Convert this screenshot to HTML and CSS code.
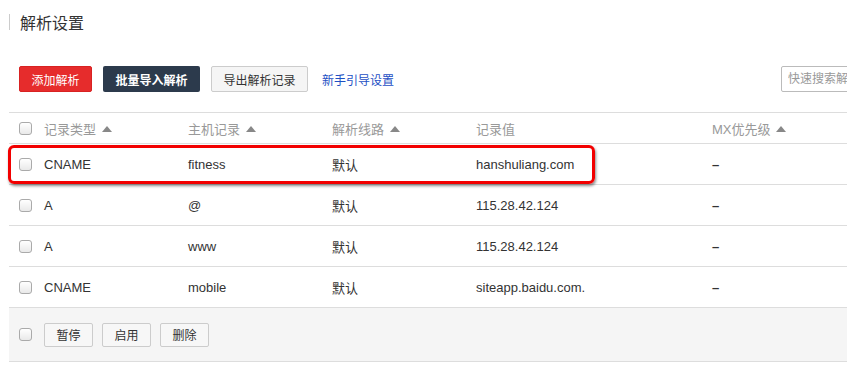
FILE: index.html
```html
<!DOCTYPE html>
<html lang="zh-CN">
<head>
    <meta charset="UTF-8">
    <title>解析设置</title>
    <link rel="stylesheet" href="styles.css">
</head>
<body>
    <div class="page">
        <div class="page-title">
            <h1>解析设置</h1>
        </div>

        <div class="toolbar">
            <button class="btn btn-red">添加解析</button>
            <button class="btn btn-dark">批量导入解析</button>
            <button class="btn btn-light">导出解析记录</button>
            <a class="guide-link" href="#">新手引导设置</a>
            <input class="search" type="text" placeholder="快速搜索解析记录">
        </div>

        <div class="record-table">
            <div class="row head">
                <div class="cell check"><span class="box"></span></div>
                <div class="cell">记录类型 <span class="caret"></span></div>
                <div class="cell">主机记录 <span class="caret"></span></div>
                <div class="cell">解析线路 <span class="caret"></span></div>
                <div class="cell">记录值</div>
                <div class="cell">MX优先级 <span class="caret"></span></div>
            </div>
            <div class="row highlighted">
                <div class="cell check"><span class="box"></span></div>
                <div class="cell">CNAME</div>
                <div class="cell">fitness</div>
                <div class="cell">默认</div>
                <div class="cell">hanshuliang.com</div>
                <div class="cell dash">–</div>
                <div class="mark"></div>
            </div>
            <div class="row">
                <div class="cell check"><span class="box"></span></div>
                <div class="cell">A</div>
                <div class="cell">@</div>
                <div class="cell">默认</div>
                <div class="cell">115.28.42.124</div>
                <div class="cell dash">–</div>
            </div>
            <div class="row">
                <div class="cell check"><span class="box"></span></div>
                <div class="cell">A</div>
                <div class="cell">www</div>
                <div class="cell">默认</div>
                <div class="cell">115.28.42.124</div>
                <div class="cell dash">–</div>
            </div>
            <div class="row">
                <div class="cell check"><span class="box"></span></div>
                <div class="cell">CNAME</div>
                <div class="cell">mobile</div>
                <div class="cell">默认</div>
                <div class="cell">siteapp.baidu.com.</div>
                <div class="cell dash">–</div>
            </div>
            <div class="table-footer">
                <span class="box"></span>
                <button class="btn-small">暂停</button>
                <button class="btn-small">启用</button>
                <button class="btn-small">删除</button>
            </div>
        </div>
    </div>
</body>
</html>
```

FILE: styles.css
```css
body {
    margin: 0;
    font-family: 'Liberation Sans', 'Noto Sans CJK SC', sans-serif;
    color: #333;
    background: #fff;
    overflow: hidden;
}
.page {
    width: 960px;
    padding: 14px 0 0 9px;
}
.page-title {
    border-left: 1px solid #ccc;
    height: 16px;
    display: flex;
    align-items: center;
}
.page-title h1 {
    margin: 0 0 0 10px;
    font-size: 16px;
    font-weight: normal;
    color: #333;
}
.toolbar {
    display: flex;
    align-items: center;
    margin-top: 36px;
    padding-left: 10px;
    height: 26px;
}
.btn {
    font-family: inherit;
    font-size: 12px;
    height: 26px;
    border-radius: 2px;
    border: 1px solid transparent;
    margin-right: 11px;
    padding: 0;
    cursor: pointer;
}
.btn-red {
    width: 73px;
    background: #e62c2c;
    color: #fff;
    border-color: #d82222;
}
.btn-dark {
    width: 97px;
    background: #2c3a4c;
    color: #fff;
    font-weight: bold;
}
.btn-light {
    width: 97px;
    background: #f5f5f5;
    color: #333;
    border-color: #ccc;
}
.guide-link {
    margin-left: 3px;
    font-size: 12px;
    color: #1d4fc4;
    text-decoration: none;
}
.search {
    margin-left: auto;
    margin-right: 28px;
    width: 160px;
    height: 26px;
    box-sizing: border-box;
    border: 1px solid #bbb;
    border-radius: 2px;
    padding: 0 6px;
    font-family: inherit;
    font-size: 12px;
}
.search::placeholder {
    color: #999;
}
.record-table {
    margin-top: 20px;
    border-top: 1px solid #ddd;
}
.row {
    position: relative;
    display: grid;
    grid-template-columns: 35px 144px 144px 144px 236px 1fr;
    align-items: center;
    height: 40px;
    border-bottom: 1px solid #ddd;
    font-size: 13px;
}
.row.head {
    height: 30px;
    color: #999;
}
.cell.check {
    padding-left: 10px;
    display: flex;
}
.cell.dash {
    font-weight: bold;
}
.box {
    display: inline-block;
    width: 11px;
    height: 11px;
    border: 1px solid #aaa;
    border-radius: 3px;
    background: linear-gradient(#fff, #e9e9e9);
}
.caret {
    display: inline-block;
    width: 0;
    height: 0;
    border-left: 5px solid transparent;
    border-right: 5px solid transparent;
    border-bottom: 6px solid #888;
    margin-left: 2px;
    vertical-align: 2px;
}
.mark {
    position: absolute;
    left: -1px;
    top: 1px;
    width: 581px;
    height: 33px;
    border: 3px solid #f20000;
    border-radius: 6px;
    box-shadow: 1px 2px 3px rgba(0, 0, 0, 0.45);
    pointer-events: none;
}
.table-footer {
    display: flex;
    align-items: center;
    height: 53px;
    padding-left: 10px;
    background: #f5f5f5;
    border-bottom: 1px solid #ddd;
}
.table-footer .box {
    margin-right: 12px;
}
.btn-small {
    width: 49px;
    height: 24px;
    margin-right: 9px;
    padding: 0;
    font-family: inherit;
    font-size: 12px;
    color: #333;
    background: #f7f7f7;
    border: 1px solid #ccc;
    border-radius: 2px;
}
```
